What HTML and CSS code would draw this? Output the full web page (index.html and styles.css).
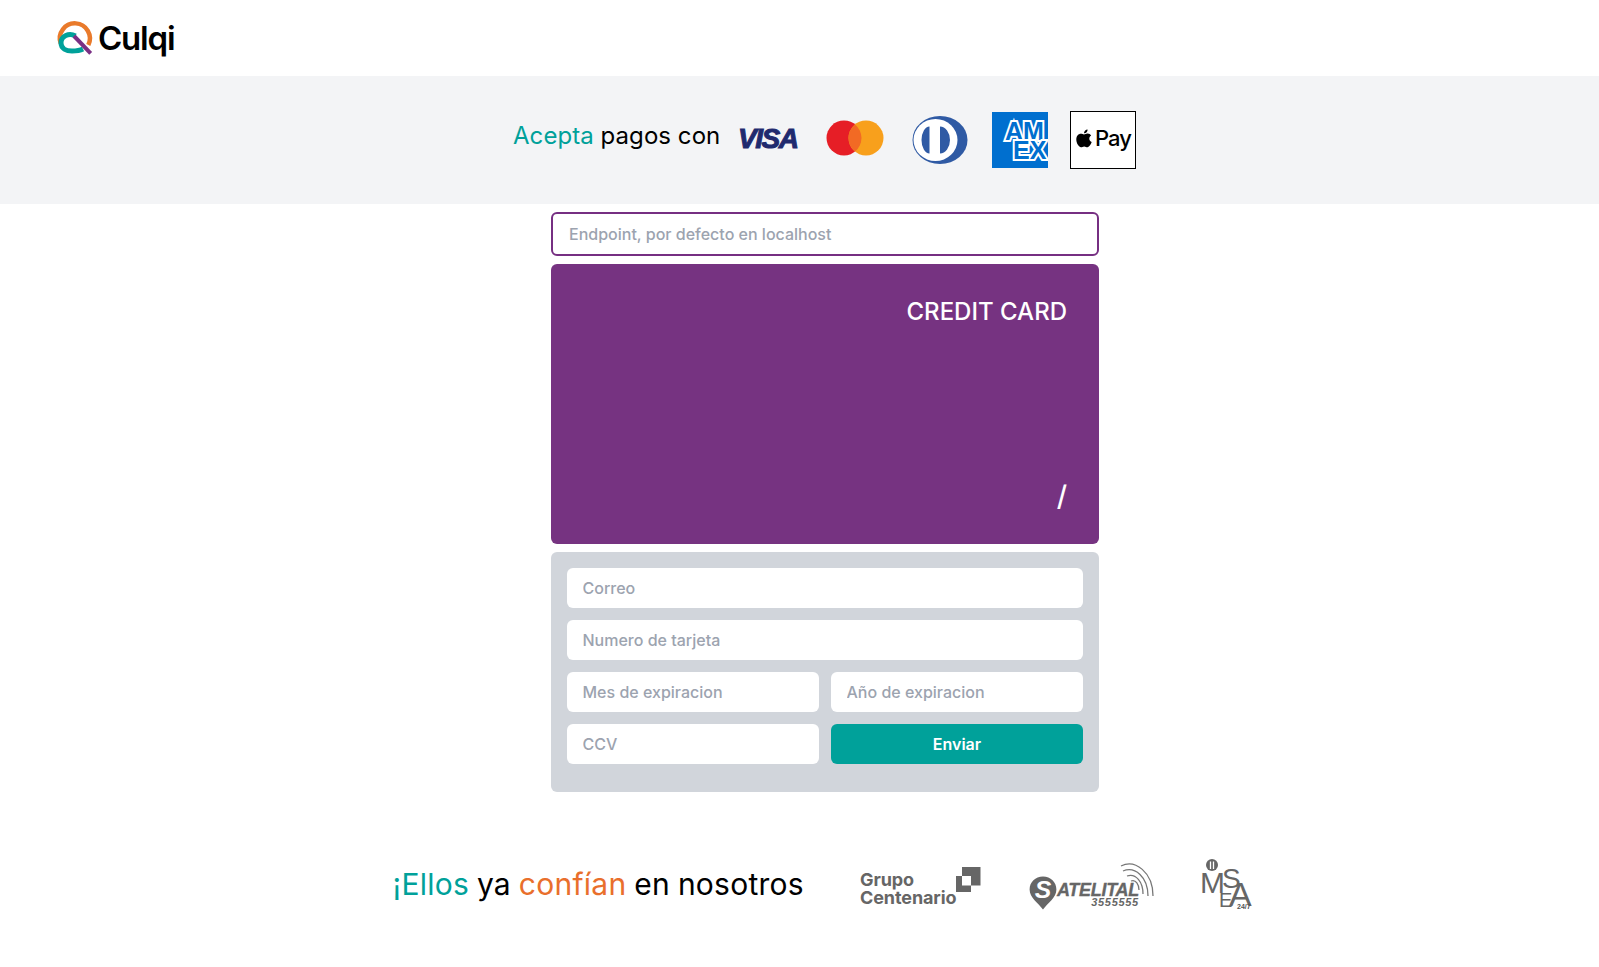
FILE: index.html
```html
<!DOCTYPE html>
<html lang="es">
<head>
<meta charset="utf-8">
<title>Culqi</title>
<link rel="stylesheet" href="styles.css">
</head>
<body>
<header class="topbar">
  <svg class="q-logo" width="36" height="36" viewBox="0 0 36 36">
    <path d="M4.700 23.300A15 15 0 1 1 32.300 25" fill="none" stroke="#e97a2b" stroke-width="4.500"/>
    <path d="M19.500 16C13 12.500 5 16 5 23C5 28.500 10.500 31 16 31C20 31 24 30.500 27 29" fill="none" stroke="#00a19a" stroke-width="5"/>
    <path d="M18 16L34.700 33.300" fill="none" stroke="#7a2f84" stroke-width="4"/>
  </svg>
  <span class="wordmark">Culqi</span>
</header>

<section class="band">
  <h2 class="accept"><span class="teal">Acepta</span> pagos con</h2>
  <svg class="b-visa" width="62" height="24" viewBox="0 0 62 24">
    <text x="1" y="22" class="visa-text">VISA</text>
  </svg>
  <svg class="b-mc" width="58" height="36" viewBox="0 0 58 36">
    <circle cx="18" cy="18" r="17.500" fill="#e61e26"/>
    <circle cx="40" cy="18" r="17.500" fill="#f8a01c"/>
    <path d="M29 4.400A17.500 17.500 0 0 1 29 31.600A17.500 17.500 0 0 1 29 4.400Z" fill="#f26a24"/>
  </svg>
  <svg class="b-diners" width="56" height="48" viewBox="0 0 56 48">
    <ellipse cx="28" cy="24" rx="27.500" ry="24" fill="#2f5aa4"/>
    <ellipse cx="23.500" cy="24" rx="22" ry="21" fill="#fff"/>
    <path d="M17.500 10.500A8 13.500 0 0 0 17.500 37.500Z M28 10.500A10 13.500 0 0 1 28 37.500Z" fill="#2f5aa4"/>
  </svg>
  <svg class="b-amex" width="56" height="56" viewBox="0 0 56 56">
    <rect width="56" height="56" fill="#006fcf"/>
    <text x="13" y="28" class="amex-text">AM</text>
    <text x="21" y="47" class="amex-text">EX</text>
  </svg>
  <div class="b-apple">
    <svg class="apple-mark" width="16" height="19" viewBox="0 0 16 19">
      <path d="M11.600 0.500C11.700 2.600 9.900 4.500 8 4.300C7.800 2.400 9.700 0.600 11.600 0.500Z M8 5.400C9 5.400 10.200 4.500 11.700 4.600C13.200 4.700 14.400 5.400 15.100 6.500C12.400 8.200 12.900 12 15.700 13.100C15 15.100 13.300 18.200 11.500 18.200C10.200 18.200 9.600 17.400 8.200 17.400C6.800 17.400 6.200 18.200 5 18.200C3 18.200 0.300 14.200 0.300 10.400C0.300 6.800 2.600 4.700 4.800 4.700C6.100 4.700 7.200 5.400 8 5.400Z" fill="#000"/>
    </svg>
    <span class="pay">Pay</span>
  </div>
</section>

<main class="checkout">
  <input class="endpoint" type="text" placeholder="Endpoint, por defecto en localhost">
  <div class="card">
    <div class="card-title">CREDIT CARD</div>
    <div class="card-exp">/</div>
  </div>
  <form class="form">
    <input class="field full" type="text" placeholder="Correo">
    <input class="field full" type="text" placeholder="Numero de tarjeta">
    <input class="field" type="text" placeholder="Mes de expiracion">
    <input class="field" type="text" placeholder="Año de expiracion">
    <input class="field" type="text" placeholder="CCV">
    <button class="submit" type="button">Enviar</button>
  </form>
</main>

<section class="trust">
  <h2 class="trust-title"><span class="teal">¡Ellos</span> ya <span class="orange">confían</span> en nosotros</h2>
  <div class="clients">
    <div class="grupo">
      <span class="grupo-text">Grupo<br>Centenario</span>
      <svg class="grupo-mark" width="25" height="25" viewBox="0 0 25 25">
        <path fill-rule="evenodd" d="M6 0H24.500V18.500H6Z M0 9H15V25H0Z" fill="#666"/>
      </svg>
    </div>
    <div class="satelital">
      <svg class="sat-pin" width="28" height="34" viewBox="0 0 27 33">
        <path d="M13.500 0.500C21 0.500 26.500 6 26.500 13C26.500 21 18 26 13.500 32.500C9 26 0.500 21 0.500 13C0.500 6 6 0.500 13.500 0.500Z" fill="#666"/>
        <text x="5.500" y="21" class="sat-s">S</text>
      </svg>
      <div class="sat-words">
        <span class="sat-name">ATELITAL</span>
        <span class="sat-num">3555555</span>
      </div>
      <svg class="sat-arcs" width="40" height="38" viewBox="0 0 40 38">
        <path d="M4 4C18 -3 36 10 36 34M6 9C18 4 31 15 31 34M10 14C19 11 26 20 26 32M14 19C19 17 22 23 22 28" fill="none" stroke="#777" stroke-width="1.300"/>
      </svg>
    </div>
    <div class="mesa">
      <svg class="mesa-mark" width="12" height="12" viewBox="0 0 12 12">
        <circle cx="6" cy="6" r="6" fill="#666"/>
        <path d="M4.500 2.500V10M7.500 2.500V10" stroke="#fff" stroke-width="1.300"/>
      </svg>
      <span class="mesa-l m">M</span>
      <span class="mesa-l s">S</span>
      <span class="mesa-l e">E</span>
      <span class="mesa-l a">A</span>
      <span class="mesa-h">24/7</span>
    </div>
  </div>
</section>
</body>
</html>
```
FILE: styles.css
```css
* { box-sizing: border-box; }
html, body { margin: 0; padding: 0; }
body { font-family: Inter, "Liberation Sans", sans-serif; background: #fff; color: #000; height: 967px; overflow: hidden; }
h2 { margin: 0; font-weight: 400; }
.teal { color: #00a19a; }
.orange { color: #e96f2c; }

.topbar { height: 76px; display: flex; align-items: center; padding: 0 0 0 56px; gap: 6px; }
.q-logo { flex: none; margin-top: 0; overflow: visible; }
.wordmark { font-family: Inter, sans-serif; font-weight: 600; font-size: 33px; letter-spacing: -1.2px; color: #000; margin-top: -1px; }

.band { height: 128px; background: #f3f4f6; display: flex; align-items: center; padding-left: 513px; }
.accept { font-size: 24px; line-height: 32px; width: 224px; white-space: nowrap; margin-top: -8px; letter-spacing: 0.06px; }
.b-visa { margin-top: -4px; }
.visa-text { font-family: "Liberation Sans", sans-serif; font-weight: 700; font-style: italic; font-size: 28px; fill: #1f2a6e; stroke: #1f2a6e; stroke-width: 1px; letter-spacing: -1.5px; }
.b-mc { margin-left: 27px; margin-top: -4px; }
.b-diners { margin-left: 28px; }
.b-amex { margin-left: 24px; }
.amex-text { font-family: "Liberation Sans", sans-serif; font-weight: 700; font-size: 25px; fill: #006fcf; stroke: #fff; stroke-width: 4px; paint-order: stroke; }
.b-apple { margin-left: 22px; width: 66px; height: 58px; border: 1px solid #000; background: #fff; display: flex; align-items: center; justify-content: center; gap: 3px; padding-left: 1px; }
.apple-mark { margin-top: -3px; }
.pay { font-family: Inter, sans-serif; font-size: 22px; font-weight: 500; letter-spacing: -0.9px; color: #000; margin-top: -4px; }

.checkout { width: 548px; margin: 8px 0 0 551px; display: flex; flex-direction: column; gap: 8px; }
.endpoint { width: 100%; height: 44px; border: 2px solid #762f82; border-radius: 6px; padding: 0 16px; font: 500 16px Inter, sans-serif; background: #fff; outline: none; }
input::placeholder { color: #9ca3af; opacity: 1; }
.card { height: 280px; background: #763381; border-radius: 6px; color: #fff; padding: 32px; display: flex; flex-direction: column; justify-content: space-between; align-items: flex-end; font-weight: 500; }
.card-title { font-size: 24px; line-height: 30px; margin-top: 1px; }
.card-exp { font-size: 28px; line-height: 32px; margin-bottom: 0; }
.form { height: 240px; background: #d1d5db; border-radius: 6px; padding: 16px; display: grid; grid-template-columns: 1fr 1fr; grid-auto-rows: 40px; gap: 12px; align-content: start; }
.field { width: 100%; height: 40px; border: 0; border-radius: 6px; background: #fff; padding: 0 16px 0 15.500px; font: 500 16px Inter, sans-serif; outline: none; }
.full { grid-column: 1 / -1; }
.submit { border: 0; border-radius: 6px; background: #00a19a; color: #fff; font: 600 16px Inter, sans-serif; }

.trust { display: flex; align-items: center; padding: 48px 0 0 392.500px; height: 130px; }
.trust-title { font-size: 30px; line-height: 36px; letter-spacing: 0.25px; word-spacing: -0.8px; width: 467.500px; white-space: nowrap; margin-top: 6px; }
.clients { display: flex; align-items: flex-end; height: 60px; }
.grupo { display: flex; align-items: flex-start; width: 169px; padding-bottom: 4px; }
.grupo-text { font-weight: 700; font-size: 18px; line-height: 18px; color: #666; letter-spacing: -0.1px; }
.grupo-mark { margin-top: -4px; margin-left: 0; }
.satelital { position: relative; width: 172px; height: 44px; display: flex; align-items: flex-end; margin-bottom: 1px; }
.sat-pin { flex: none; margin-bottom: 0; }
.sat-s { font-family: "Liberation Sans", sans-serif; font-weight: 700; font-style: italic; font-size: 24px; fill: #fff; }
.sat-words { display: flex; flex-direction: column; align-items: flex-end; margin-left: 0; margin-bottom: 3px; }
.sat-name { font-family: "Liberation Sans", sans-serif; font-weight: 700; font-style: italic; font-size: 18px; line-height: 16px; color: #666; letter-spacing: -0.3px; -webkit-text-stroke: 0.3px #666; }
.sat-num { font-family: "Liberation Sans", sans-serif; font-weight: 700; font-style: italic; font-size: 11px; line-height: 9px; color: #666; letter-spacing: 0.7px; }
.sat-arcs { position: absolute; left: 88px; top: -4px; }
.mesa { position: relative; width: 54px; height: 52px; color: #666; margin-left: -1px; }
.mesa-mark { position: absolute; left: 6px; top: 0; }
.mesa-l { position: absolute; font-family: "Liberation Sans", sans-serif; line-height: 1; color: #666; font-weight: 400; }
.m { left: 0; top: 9px; font-size: 30px; }
.s { left: 22px; top: 6px; font-size: 28px; }
.e { left: 19px; top: 31px; font-size: 20px; }
.a { left: 29px; top: 18px; font-size: 34px; }
.mesa-h { position: absolute; left: 37px; top: 44px; font-family: "Liberation Sans", sans-serif; font-size: 7px; font-weight: 700; color: #555; }
```
